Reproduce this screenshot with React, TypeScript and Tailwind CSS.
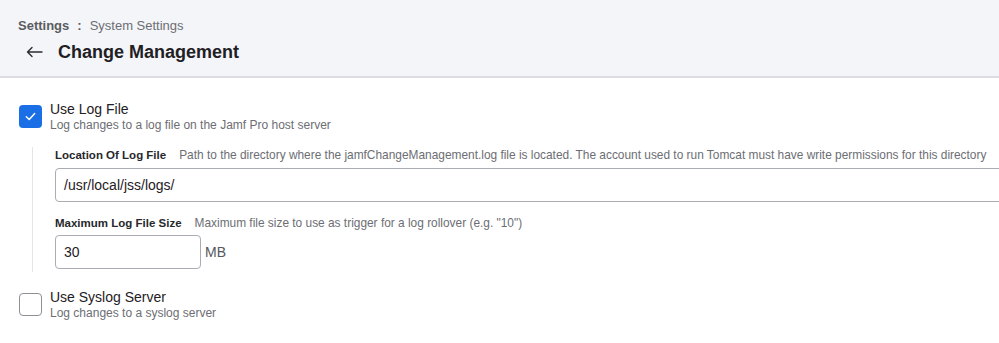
import React from 'react';

const font = { fontFamily: '"Liberation Sans", Arial, sans-serif' };

const CheckRow: React.FC<{ checked: boolean; title: string; subtitle: string }> = ({ checked, title, subtitle }) => (
  <div className="flex items-start gap-2">
    <div
      className={
        checked
          ? 'mt-[1px] flex h-[23px] w-[23px] shrink-0 items-center justify-center rounded-[4px] bg-[#1a6fe6]'
          : 'mt-[1px] h-[23px] w-[23px] shrink-0 rounded-[4px] border border-[#8d9096] bg-white'
      }
    >
      {checked && (
        <svg width="13" height="13" viewBox="0 0 14 14" fill="none">
          <path d="M2.5 7.2 L5.6 10.2 L11.5 3.8" stroke="white" strokeWidth="1.6" strokeLinecap="round" strokeLinejoin="round" />
        </svg>
      )}
    </div>
    <div className="-mt-[3px] flex flex-col">
      <span className="text-[14px] leading-[16px] text-[#1f2024]">{title}</span>
      <span className="text-[12px] leading-[16px] text-[#6c6e73]">{subtitle}</span>
    </div>
  </div>
);

const FieldLabel: React.FC<{ label: string; help: string }> = ({ label, help }) => (
  <div className="flex items-baseline gap-[13px] whitespace-nowrap leading-[16px]">
    <span className="text-[11.5px] font-bold text-[#26282c]">{label}</span>
    <span className="text-[11.9px] text-[#6c6e73]">{help}</span>
  </div>
);

export default function App() {
  return (
    <div className="h-[343px] w-[999px] overflow-hidden bg-white" style={font}>
      <header className="h-[78px] border-b-2 border-[#dcdde2] bg-[#f4f5f8] pl-[18px] pt-[17px]">
        <div className="flex items-center gap-[8px] text-[13px] leading-[18px]">
          <span className="font-bold text-[#5a5c61]">Settings</span>
          <span className="font-bold text-[#5a5c61]">:</span>
          <span className="text-[#6c6e73]">System Settings</span>
        </div>
        <div className="mt-[5px] flex items-center gap-[15px] pl-[8px]">
          <svg width="17" height="12" viewBox="0 0 17 12" fill="none">
            <path d="M16 6 H1.5 M6 1.5 L1.5 6 L6 10.5" stroke="#2b2d31" strokeWidth="1.4" strokeLinecap="round" strokeLinejoin="round" />
          </svg>
          <h1 className="text-[18px] font-semibold leading-[24px] text-[#1f2024]">Change Management</h1>
        </div>
      </header>

      <main className="pl-[19px] pt-[26px]">
        <CheckRow checked title="Use Log File" subtitle="Log changes to a log file on the Jamf Pro host server" />

        <div className="ml-[13px] mt-[14px] border-l border-[#e4e5e8] pb-[3px] pl-[22px]">
          <FieldLabel
            label="Location Of Log File"
            help="Path to the directory where the jamfChangeManagement.log file is located. The account used to run Tomcat must have write permissions for this directory"
          />
          <div className="mt-[5px] flex h-[34px] w-[980px] items-center rounded-[4px] border border-[#a9acb2] px-[8px] text-[14px] text-[#1f2024]">
            /usr/local/jss/logs/
          </div>

          <div className="mt-[13px]">
            <FieldLabel label="Maximum Log File Size" help={'Maximum file size to use as trigger for a log rollover (e.g. "10")'} />
          </div>
          <div className="mt-[4px] flex items-center gap-[4px]">
            <div className="flex h-[34px] w-[146px] items-center rounded-[4px] border border-[#a9acb2] px-[8px] text-[14px] text-[#1f2024]">
              30
            </div>
            <span className="text-[14px] text-[#55575c]">MB</span>
          </div>
        </div>

        <div className="mt-[20px]">
          <CheckRow checked={false} title="Use Syslog Server" subtitle="Log changes to a syslog server" />
        </div>
      </main>
    </div>
  );
}
